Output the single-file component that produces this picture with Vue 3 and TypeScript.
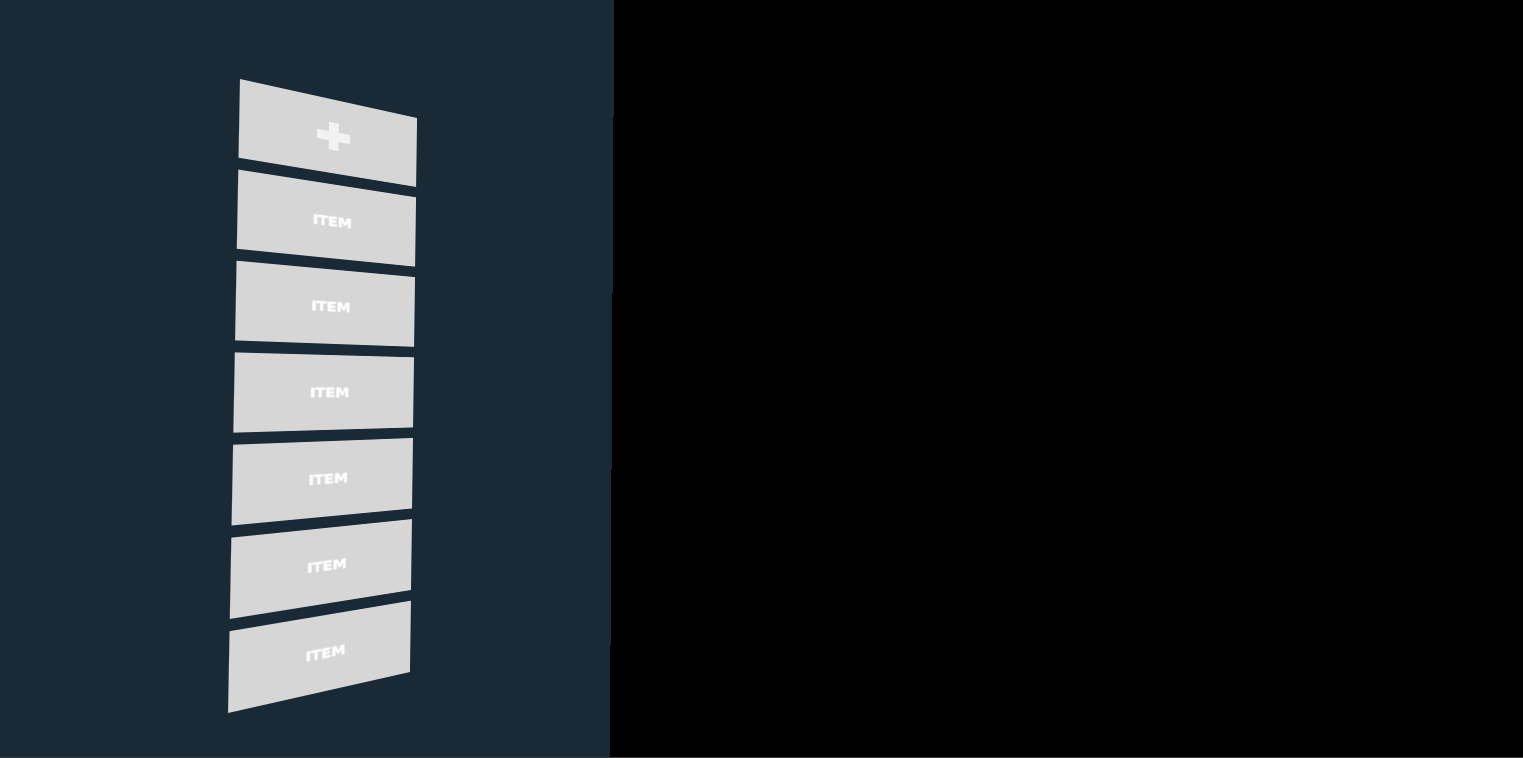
<script setup lang="ts">
const items: string[] = ['ITEM', 'ITEM', 'ITEM', 'ITEM', 'ITEM', 'ITEM']
</script>

<template>
  <div class="stage">
    <aside class="panel">
      <button class="item add" type="button" aria-label="Add">
        <svg class="plus" viewBox="0 0 34 30" width="34" height="30" aria-hidden="true">
          <path d="M12 0h10v10h12v10H22v10H12V20H0V10h12z" />
        </svg>
      </button>
      <button v-for="(label, i) in items" :key="i" class="item" type="button">{{ label }}</button>
    </aside>
  </div>
</template>

<style scoped>
.stage {
  height: calc(100vh - 1px);
  background: #000;
  overflow: hidden;
}
.panel {
  box-sizing: border-box;
  width: 651px;
  height: 1060px;
  padding: 240px 0 0 200px;
  display: flex;
  flex-direction: column;
  gap: 12px;
  background: #192a36;
  transform-origin: 0 0;
  transform: matrix3d(1.3141, 0.310267, 0, 0.00079321, -0.026918, 0.978367, 0, -0.00003478, 0, 0, 1, 0, -16.36, -217.861, 0, 0.849705);
}
.item {
  width: 180px;
  height: 80px;
  flex: none;
  padding: 0;
  border: 0;
  background: #d6d6d6;
  color: #fff;
  font: 700 14.5px "DejaVu Sans", sans-serif;
  -webkit-text-stroke: 0.35px #fff;
  display: flex;
  align-items: center;
  justify-content: center;
}
.plus {
  fill: #f2f2f2;
}
</style>

<style>
html, body {
  margin: 0;
  overflow: hidden;
  background: #3a3a3a;
}
</style>
